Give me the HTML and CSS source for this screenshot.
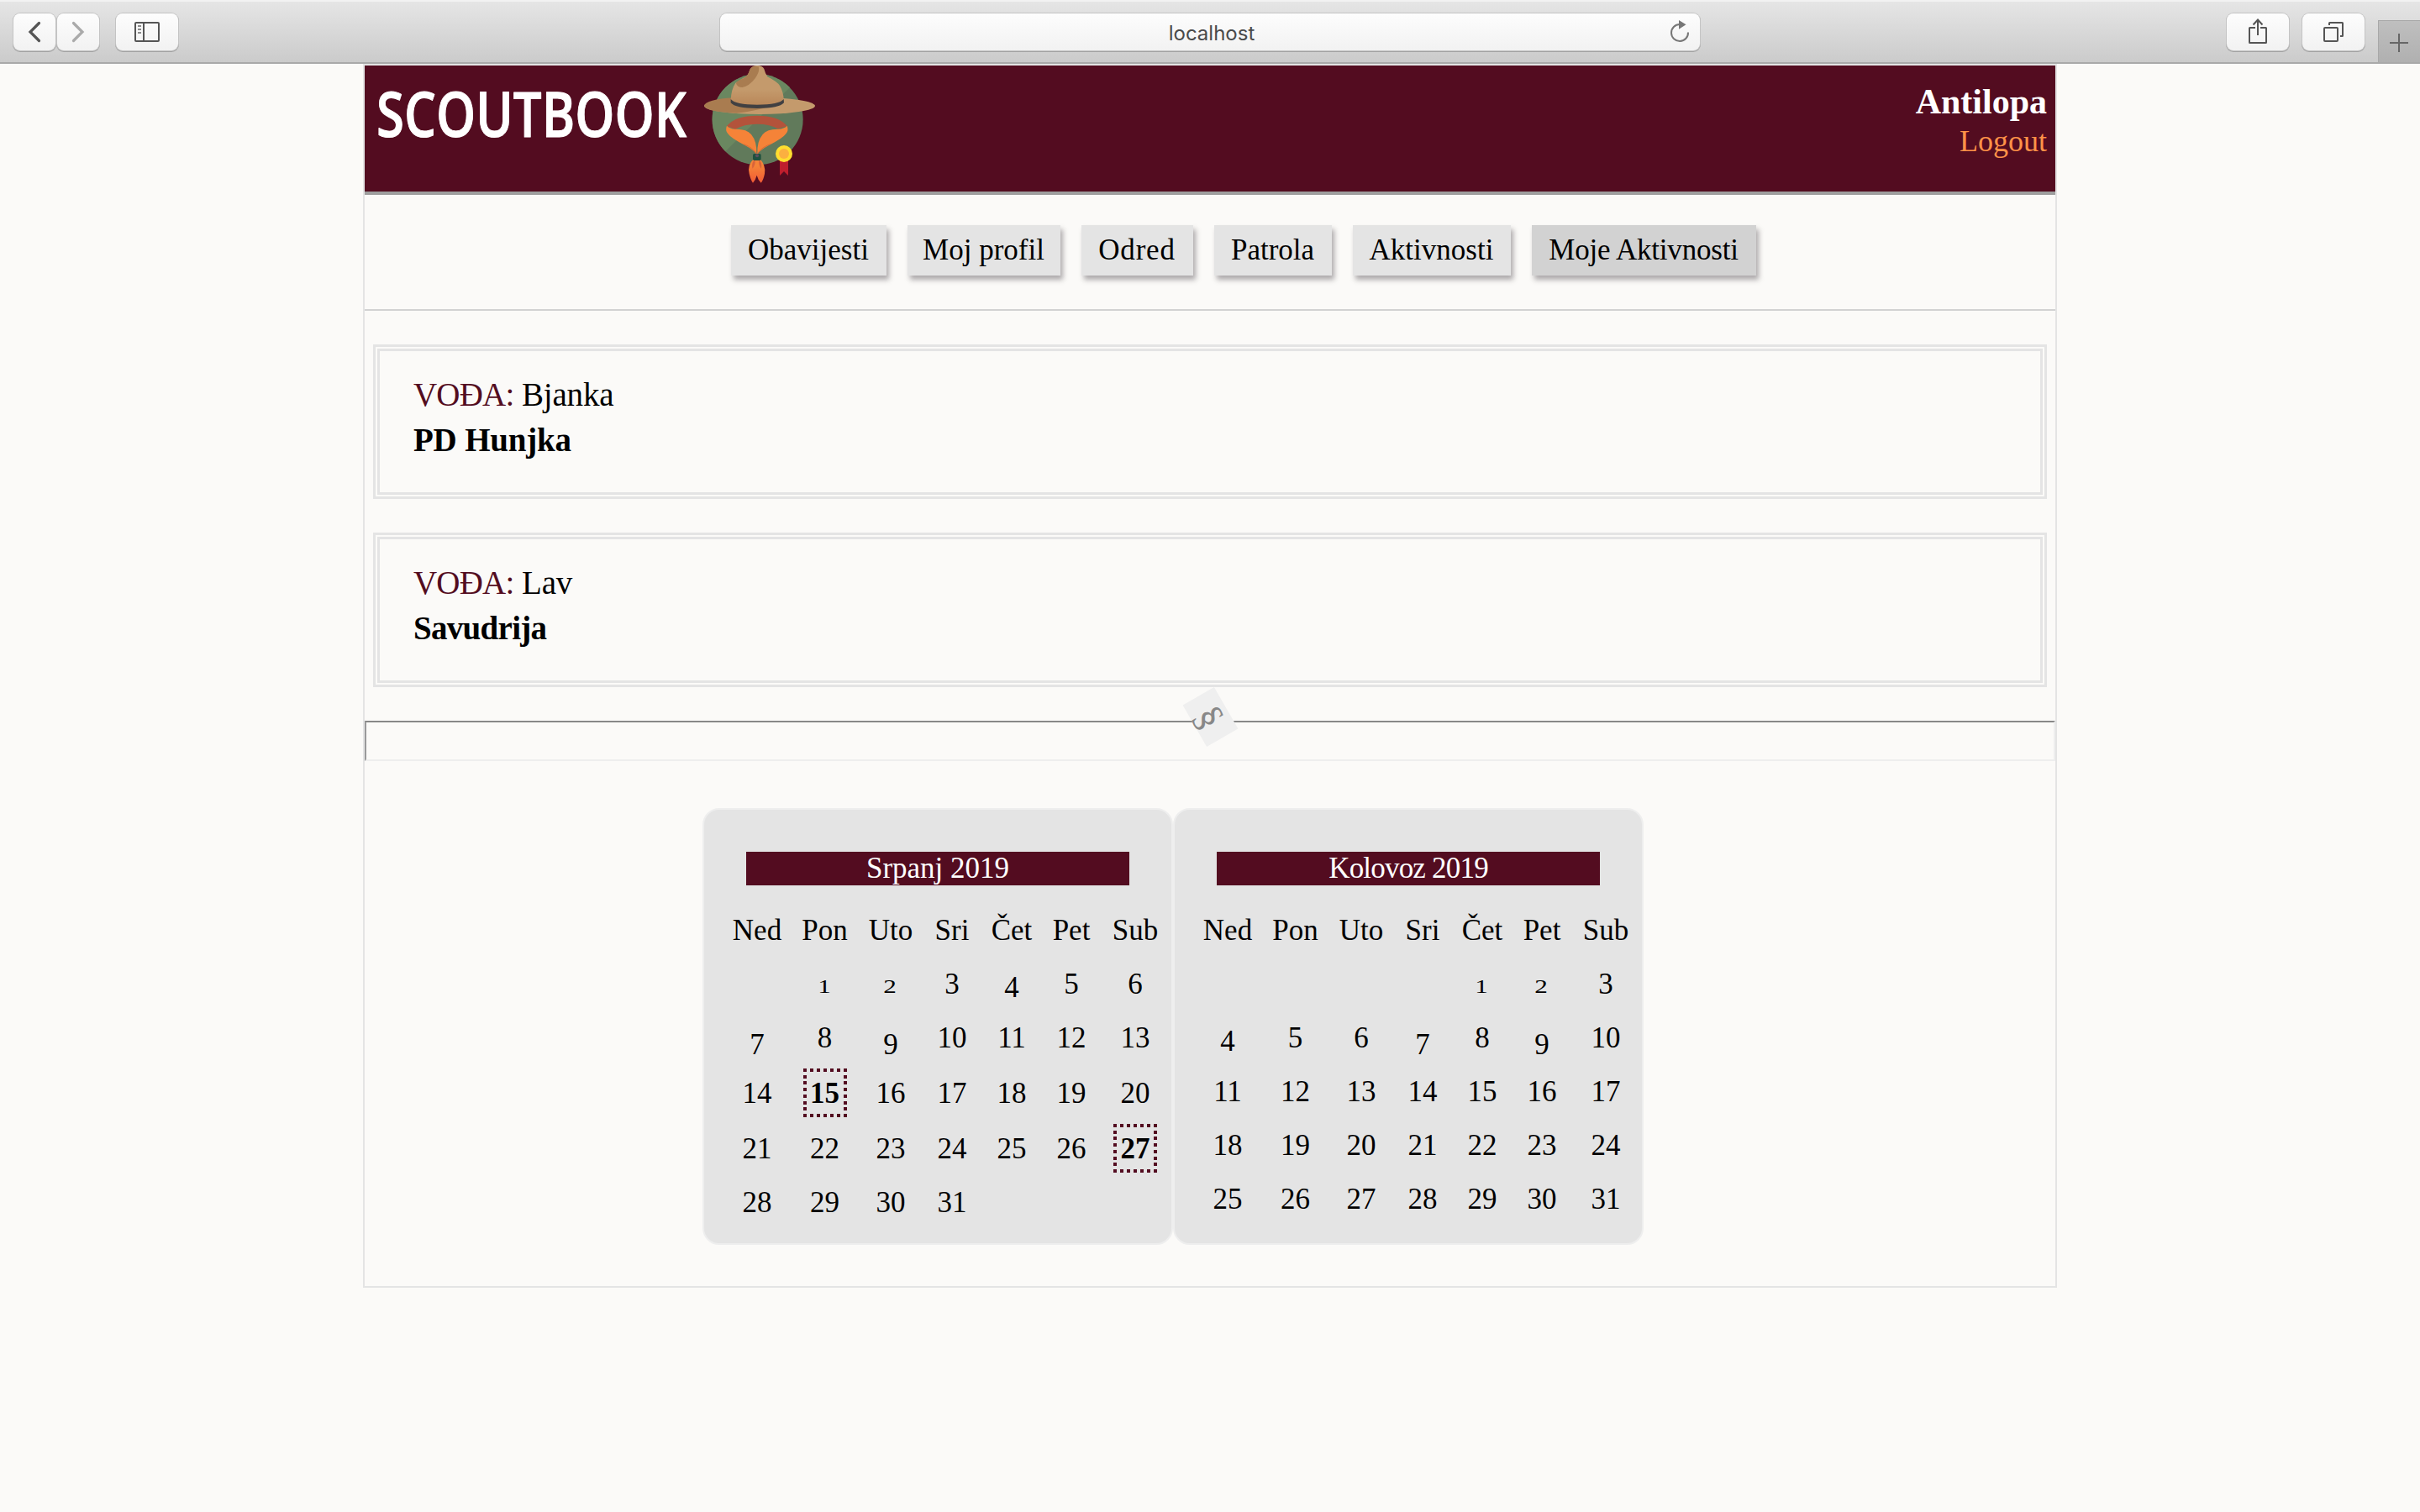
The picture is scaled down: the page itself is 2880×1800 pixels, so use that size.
FILE: index.html
```html
<!DOCTYPE html>
<html lang="hr">
<head>
<meta charset="utf-8">
<title>Scoutbook</title>
<link rel="stylesheet" href="styles.css">
</head>
<body>
<div class="toolbar">
  <div class="tools">
    <div class="pair">
      <span class="tool tool-nav"><svg width="50" height="44" viewBox="16 16 50 44"><path d="M46.5 27.5L36 38l10.500 10.500" fill="none" stroke="#555" stroke-width="3.200" stroke-linecap="round" stroke-linejoin="miter"/></svg></span>
      <span class="tool tool-nav"><svg width="50" height="44" viewBox="68 16 50 44"><path d="M87.500 27.500L98 38L87.500 48.500" fill="none" stroke="#aaa" stroke-width="3.200" stroke-linecap="round"/></svg></span>
    </div>
    <span class="tool"><svg width="74" height="44" viewBox="138 16 74 44"><rect x="161" y="27" width="28" height="22" rx="1" fill="none" stroke="#555" stroke-width="2"/><path d="M171 27v22" stroke="#555" stroke-width="2"/><path d="M164 31h4M164 35h4M164 39h4" stroke="#8a8a8a" stroke-width="2"/></svg></span>
  </div>
  <div class="address">
    <span>localhost</span>
    <svg class="reload" width="26" height="30" viewBox="1986 22 26 30"><path d="M1999 29a10 10 0 1 0 10 9.500" fill="none" stroke="#777" stroke-width="2"/><path d="M1998 24l8.500 5.300l-8.500 5.400z" fill="#777"/></svg>
  </div>
  <div class="tools tools-right">
    <span class="tool"><svg width="74" height="44" viewBox="2650 16 74 44"><path d="M2684 33h-6.500q-.5 0-.5.5V50.500q0 .5.5.5h19q.5 0 .5-.5V33.500q0-.5-.5-.5H2690M2687 42V24M2681.500 29.500L2687 23.500L2692.500 29.500" fill="none" stroke="#555" stroke-width="2"/></svg></span>
    <span class="tool"><svg width="74" height="44" viewBox="2740 16 74 44"><rect x="2766" y="33" width="16" height="16" rx="1" fill="none" stroke="#555" stroke-width="2"/><path d="M2772 30V27.500q0-.5.5-.5H2787.500q.5 0 .5.5V42.500q0 .5-.5.5H2785" fill="none" stroke="#555" stroke-width="2"/></svg></span>
    <span class="new-tab"><svg width="50" height="50" viewBox="2830 24 50 50"><path d="M2844 51h22M2855 40v22" stroke="#666" stroke-width="2"/></svg></span>
  </div>
</div>

<div class="page">
  <header class="masthead">
    <div class="brand">
      <svg class="wordmark" width="386" height="140" viewBox="0 0 386 140"><text x="0" y="85" textLength="369" lengthAdjust="spacingAndGlyphs">SCOUTBOOK</text></svg>
      <svg class="emblem" width="132" height="140" viewBox="54 234 396 420">
        <defs>
          <linearGradient id="crown" x1="0" y1="0" x2="0" y2="1"><stop offset=".6" stop-color="#c49a6c"/><stop offset="1" stop-color="#b98759"/></linearGradient>
          <linearGradient id="tail" x1="0" y1="0" x2="0" y2="1"><stop offset=".3" stop-color="#f58338"/><stop offset="1" stop-color="#f15a35"/></linearGradient>
        </defs>
        <circle cx="245" cy="427" r="162" fill="#617a5b"/>
        <path d="M130 541A162 162 0 0 1 360 312z" fill="#6a8760"/>
        <ellipse cx="252" cy="378" rx="198" ry="30" fill="#c49a6c"/>
        <path d="M54 378Q60 355 160 349L290 380Q240 395 170 404Q62 400 54 378z" fill="#a97c50"/>
        <path d="M149 358Q150 320 166 296Q190 280 207 272Q213 262 218 247Q226 234 243 234Q262 234 268 246Q272 262 280 274Q315 292 324 306Q338 330 338 358Q320 376 243 376Q165 376 149 358z" fill="url(#crown)"/>
        <path d="M248 238Q222 232 216 253Q211 270 195 280Q168 290 168 298Q172 312 190 312Q215 308 236 280Q254 254 248 238z" fill="#a97c50"/>
        <path d="M149 354Q165 374 243 374Q322 374 338 354L339 367Q322 387 243 387Q165 387 149 367z" fill="#414042"/>
        <path d="M135 450Q165 413 243 413Q320 413 350 450L318 460Q290 443 243 443Q195 443 165 462z" fill="#b3533b"/>
        <path d="M135 449Q128 465 139 478Q150 494 200 519Q230 535 241 550Q243 505 222 480Q205 460 165 461Q145 460 135 449z" fill="#f58338"/>
        <path d="M350 449Q357 465 346 478Q335 494 285 519Q255 535 244 550Q242 505 263 480Q280 460 318 461Q340 460 350 449z" fill="#f58338"/>
        <path d="M195 515Q230 528 241 550M290 515Q255 528 244 550" fill="none" stroke="#dc6b35" stroke-width="3"/>
        <path d="M232 566Q207 590 215 620Q220 642 228 653Q238 642 242 626Q246 642 257 653Q266 642 270 620Q275 590 252 566z" fill="url(#tail)"/>
        <path d="M235 571Q222 580 226 602Q238 592 235 571zM250 571Q262 580 258 602Q247 592 250 571z" fill="#d9633a"/>
        <rect x="228" y="549" width="29" height="24" rx="5" fill="#20513f"/>
        <circle cx="243" cy="556" r="6" fill="#5c5060"/>
        <path d="M324 570h30v57l-15-15l-15 15z" fill="#be1e2d"/>
        <circle cx="339" cy="549" r="30" fill="#ffde2f"/>
        <circle cx="339" cy="549" r="18" fill="#fbb040"/>
      </svg>
    </div>
    <div class="user">
      <strong class="user-name">Antilopa</strong>
      <a class="logout">Logout</a>
    </div>
  </header>

  <nav class="menu">
    <a class="menu-item w-obavijesti">Obavijesti</a>
    <a class="menu-item w-profil">Moj profil</a>
    <a class="menu-item w-odred">Odred</a>
    <a class="menu-item w-patrola">Patrola</a>
    <a class="menu-item w-aktivnosti">Aktivnosti</a>
    <a class="menu-item w-moje active">Moje Aktivnosti</a>
  </nav>

  <main>
    <section class="activity">
      <div><span class="role">VOĐA:</span> Bjanka</div>
      <strong>PD Hunjka</strong>
    </section>
    <section class="activity tight">
      <div><span class="role">VOĐA:</span> Lav</div>
      <strong>Savudrija</strong>
    </section>

    <div class="divider"><span class="ornament"><span class="glyph">§</span></span></div>

    <div class="calendars">
      <section class="calendar">
        <h2>Srpanj 2019</h2>
        <table>
          <colgroup><col class="c1"><col class="c2"><col class="c3"><col class="c4"><col class="c5"><col class="c6"><col class="c7"></colgroup>
          <tr><th>Ned</th><th>Pon</th><th>Uto</th><th>Sri</th><th>Čet</th><th>Pet</th><th>Sub</th></tr>
          <tr><td></td><td><span class="low">1</span></td><td><span class="low">2</span></td><td>3</td><td><span class="drop-s">4</span></td><td>5</td><td>6</td></tr>
          <tr><td><span class="drop">7</span></td><td>8</td><td><span class="drop">9</span></td><td>10</td><td>11</td><td>12</td><td>13</td></tr>
          <tr class="tall"><td>14</td><td><b class="event">15</b></td><td>16</td><td>17</td><td>18</td><td>19</td><td>20</td></tr>
          <tr class="tall"><td>21</td><td>22</td><td>23</td><td>24</td><td>25</td><td>26</td><td><b class="event">27</b></td></tr>
          <tr><td>28</td><td>29</td><td>30</td><td>31</td><td></td><td></td><td></td></tr>
        </table>
      </section>
      <section class="calendar">
        <h2 class="narrow">Kolovoz 2019</h2>
        <table>
          <colgroup><col class="c1"><col class="c2"><col class="c3"><col class="c4"><col class="c5"><col class="c6"><col class="c7"></colgroup>
          <tr><th>Ned</th><th>Pon</th><th>Uto</th><th>Sri</th><th>Čet</th><th>Pet</th><th>Sub</th></tr>
          <tr><td></td><td></td><td></td><td></td><td><span class="low">1</span></td><td><span class="low">2</span></td><td>3</td></tr>
          <tr><td><span class="drop-s">4</span></td><td>5</td><td>6</td><td><span class="drop">7</span></td><td>8</td><td><span class="drop">9</span></td><td>10</td></tr>
          <tr><td>11</td><td>12</td><td>13</td><td>14</td><td>15</td><td>16</td><td>17</td></tr>
          <tr><td>18</td><td>19</td><td>20</td><td>21</td><td>22</td><td>23</td><td>24</td></tr>
          <tr><td>25</td><td>26</td><td>27</td><td>28</td><td>29</td><td>30</td><td>31</td></tr>
        </table>
      </section>
    </div>
  </main>
</div>
</body>
</html>
```
FILE: styles.css
```css
* { box-sizing: border-box; }

body {
  margin: 0;
  min-height: 1800px;
  background: #fbfaf8;
  color: #000;
  font-family: "Liberation Serif", serif;
  font-size: 35px;
}

svg { display: block; }

/* Browser toolbar */
.toolbar {
  display: grid;
  grid-template-columns: 1fr 1166px 1fr;
  height: 76px;
  padding-top: 15px;
  background: linear-gradient(#e6e6e6, #cbcbcb);
  border-bottom: 2px solid #a9a9a9;
  box-shadow: inset 0 2px 0 #f2f2f2;
}
.tools { display: flex; gap: 20px; padding-left: 16px; align-items: flex-start; }
.pair { display: flex; gap: 2px; }
.tools-right { justify-content: flex-end; gap: 16px; padding-left: 0; }
.tool, .address {
  background: linear-gradient(#fdfdfd, #f2f2f2);
  border-radius: 8px;
  box-shadow: 0 0 0 1px #c4c4c4, 0 1px 0 1px #a2a2a2;
  height: 44px;
  margin-top: 1px;
}
.address {
  position: relative;
  display: flex;
  align-items: center;
  justify-content: center;
  font: 24px Inter, sans-serif;
  color: #4a4a4a;
  padding: 2px 0 0 4px;
}
.reload { position: absolute; right: 11px; top: 6px; }
.new-tab {
  width: 50px;
  height: 50px;
  margin-top: 9px;
  background: linear-gradient(#bfbfbf, #b0b0b0);
  box-shadow: inset 1px 1px 0 #a8a8a8;
}

/* Page frame */
.page {
  width: 2016px;
  height: 1457px;
  margin: 0 auto;
  border: 2px solid #e4e4e4;
}
.masthead {
  display: flex;
  justify-content: space-between;
  height: 154px;
  background: #530c20;
  border-bottom: 4px solid #9e9e9e;
}
.brand { display: flex; gap: 4px; padding-left: 14px; }
.wordmark text {
  font-family: "Open Sans", sans-serif;
  font-size: 74px;
  font-weight: 600;
  fill: #fff;
  stroke: #fff;
  stroke-width: 1px;
  stroke-linejoin: round;
}
.user {
  display: flex;
  flex-direction: column;
  align-items: flex-end;
  padding: 19px 10px 0 0;
}
.user-name { color: #fff; font-size: 42px; line-height: 48px; }
.logout { color: #ff9248; font-size: 36px; line-height: 47px; }

/* Menu */
.menu {
  display: flex;
  justify-content: center;
  gap: 25px;
  height: 138px;
  padding: 36px 0 0 79px;
  border-bottom: 2px solid #d2d2d2;
}
.menu-item {
  display: flex;
  align-items: center;
  justify-content: center;
  height: 60px;
  background: #e4e4e4;
  box-shadow: 3px 5px 6px rgba(30, 20, 30, .35);
}
.menu-item.active { background: #d2d2d2; }
.w-obavijesti { width: 185px; }
.w-profil { width: 182px; }
.w-odred { width: 133px; letter-spacing: .8px; }
.w-patrola { width: 140px; }
.w-aktivnosti { width: 188px; }
.w-moje { width: 267px; letter-spacing: -.2px; }

/* Activities */
.activity {
  height: 184px;
  margin: 40px 10px 0;
  padding: 25px 40px 0;
  border: 8px double #e4e4e4;
  font-size: 39px;
  line-height: 54px;
  letter-spacing: -.2px;
}
.activity.tight strong { letter-spacing: -.7px; }
.role { color: #530c20; letter-spacing: -.8px; }

.divider {
  position: relative;
  height: 48px;
  margin-top: 40px;
  border: 2px solid;
  border-color: #888 #eee #eee #9a9a9a;
}
.ornament {
  position: absolute;
  left: 976px;
  top: -28px;
  display: flex;
  align-items: center;
  justify-content: center;
  width: 57px;
  height: 43px;
  background: #efefef;
  color: #888;
  font-size: 46px;
  line-height: 43px;
  transform: rotate(60deg);
}
.glyph { transform: translateY(1px); }

/* Calendars */
.calendars { display: flex; padding: 56px 0 0 402px; }
.calendar {
  width: 560px;
  height: 520px;
  padding-top: 50px;
  background: #e4e4e4;
  border: 2px solid #eee;
  border-radius: 20px;
}
.calendar h2 {
  width: 456px;
  height: 40px;
  margin: 0 0 22px 50px;
  background: #530c20;
  color: #fff;
  font-size: 35px;
  font-weight: 400;
  line-height: 39px;
  text-align: center;
}
.calendar h2.narrow { letter-spacing: -.8px; }
.calendar table {
  width: 535px;
  margin-left: 21px;
  table-layout: fixed;
  border-collapse: collapse;
}
.c1 { width: 84px; }
.c2 { width: 77px; }
.c3 { width: 80px; }
.c4 { width: 66px; }
.c5 { width: 76px; }
.c6 { width: 66px; }
.c7 { width: 86px; }
.calendar th, .calendar td {
  height: 64px;
  padding: 0;
  font-weight: 400;
  line-height: 40px;
  text-align: center;
  vertical-align: middle;
}
.calendar .tall td { height: 66px; padding-top: 1px; }

/* Old-style figures */
.low { display: inline-block; font-size: 24px; line-height: 1; transform: translate(-1px, -1px) scaleX(1.3); }
.drop, .drop-s { display: inline-block; transform: translateY(8px); }
.drop-s { transform: translateY(4px); }

.event {
  display: block;
  width: 52px;
  height: 58px;
  margin: -2px auto 0;
  line-height: 59px;
  background:
    repeating-linear-gradient(90deg, #530c20 0 4px, transparent 4px 8px) 0 0 / 100% 4px no-repeat,
    repeating-linear-gradient(90deg, #530c20 0 4px, transparent 4px 8px) 0 100% / 100% 4px no-repeat,
    repeating-linear-gradient(#530c20 0 4px, transparent 4px 7.714px) 0 0 / 4px 100% no-repeat,
    repeating-linear-gradient(#530c20 0 4px, transparent 4px 7.714px) 100% 0 / 4px 100% no-repeat;
}
```
